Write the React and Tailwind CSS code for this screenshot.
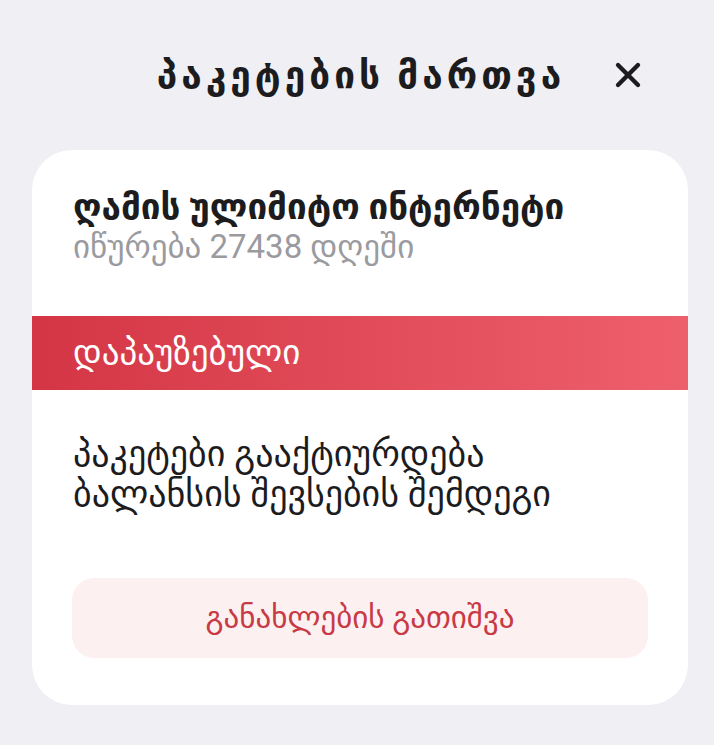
import { X } from "lucide-react";

const App = () => {
  return (
    <div
      className="min-h-[745px] bg-[#efeff4] pt-[40px] pb-[40px]"
      style={{ fontFamily: 'Roboto, "DejaVu Sans", sans-serif' }}
    >
      {/* Header */}
      <div className="relative flex items-center justify-center h-[70px]">
        <h1 className="text-[37px] font-bold tracking-[4px] text-[#1c1c1e] uppercase leading-none pl-[8px]">
          პაკეტების მართვა
        </h1>
        <button className="absolute right-[66px] top-1/2 -translate-y-1/2 text-[#1c1c1e]">
          <X size={40} strokeWidth={2.6} />
        </button>
      </div>

      {/* Card */}
      <div className="ml-[32px] mr-[26px] mt-[40px] bg-white rounded-[40px] overflow-hidden pb-[47px]">
        <div className="px-[41px] pt-[38px]">
          <div className="text-[35px] font-bold text-[#1c1c1e] leading-[40px]">
            ღამის ულიმიტო ინტერნეტი
          </div>
          <div className="text-[33px] text-[#9a9a9f] leading-[38px]">
            იწურება 27438 დღეში
          </div>
        </div>

        <div className="mt-[50px] h-[74px] flex items-center px-[41px] bg-gradient-to-r from-[#d43545] to-[#ee5f6c]">
          <span className="text-[35px] text-white">დაპაუზებული</span>
        </div>

        <div className="px-[41px] pt-[44px] text-[36px] leading-[40px] text-[#1c1c1e]">
          პაკეტები გააქტიურდება
          <br />
          ბალანსის შევსების შემდეგი
        </div>

        <div className="px-[40px] mt-[64px]">
          <button className="w-full h-[80px] rounded-[22px] bg-[#fdf0f1] text-[#c83a46] text-[31px]">
            განახლების გათიშვა
          </button>
        </div>
      </div>
    </div>
  );
};

export default App;
